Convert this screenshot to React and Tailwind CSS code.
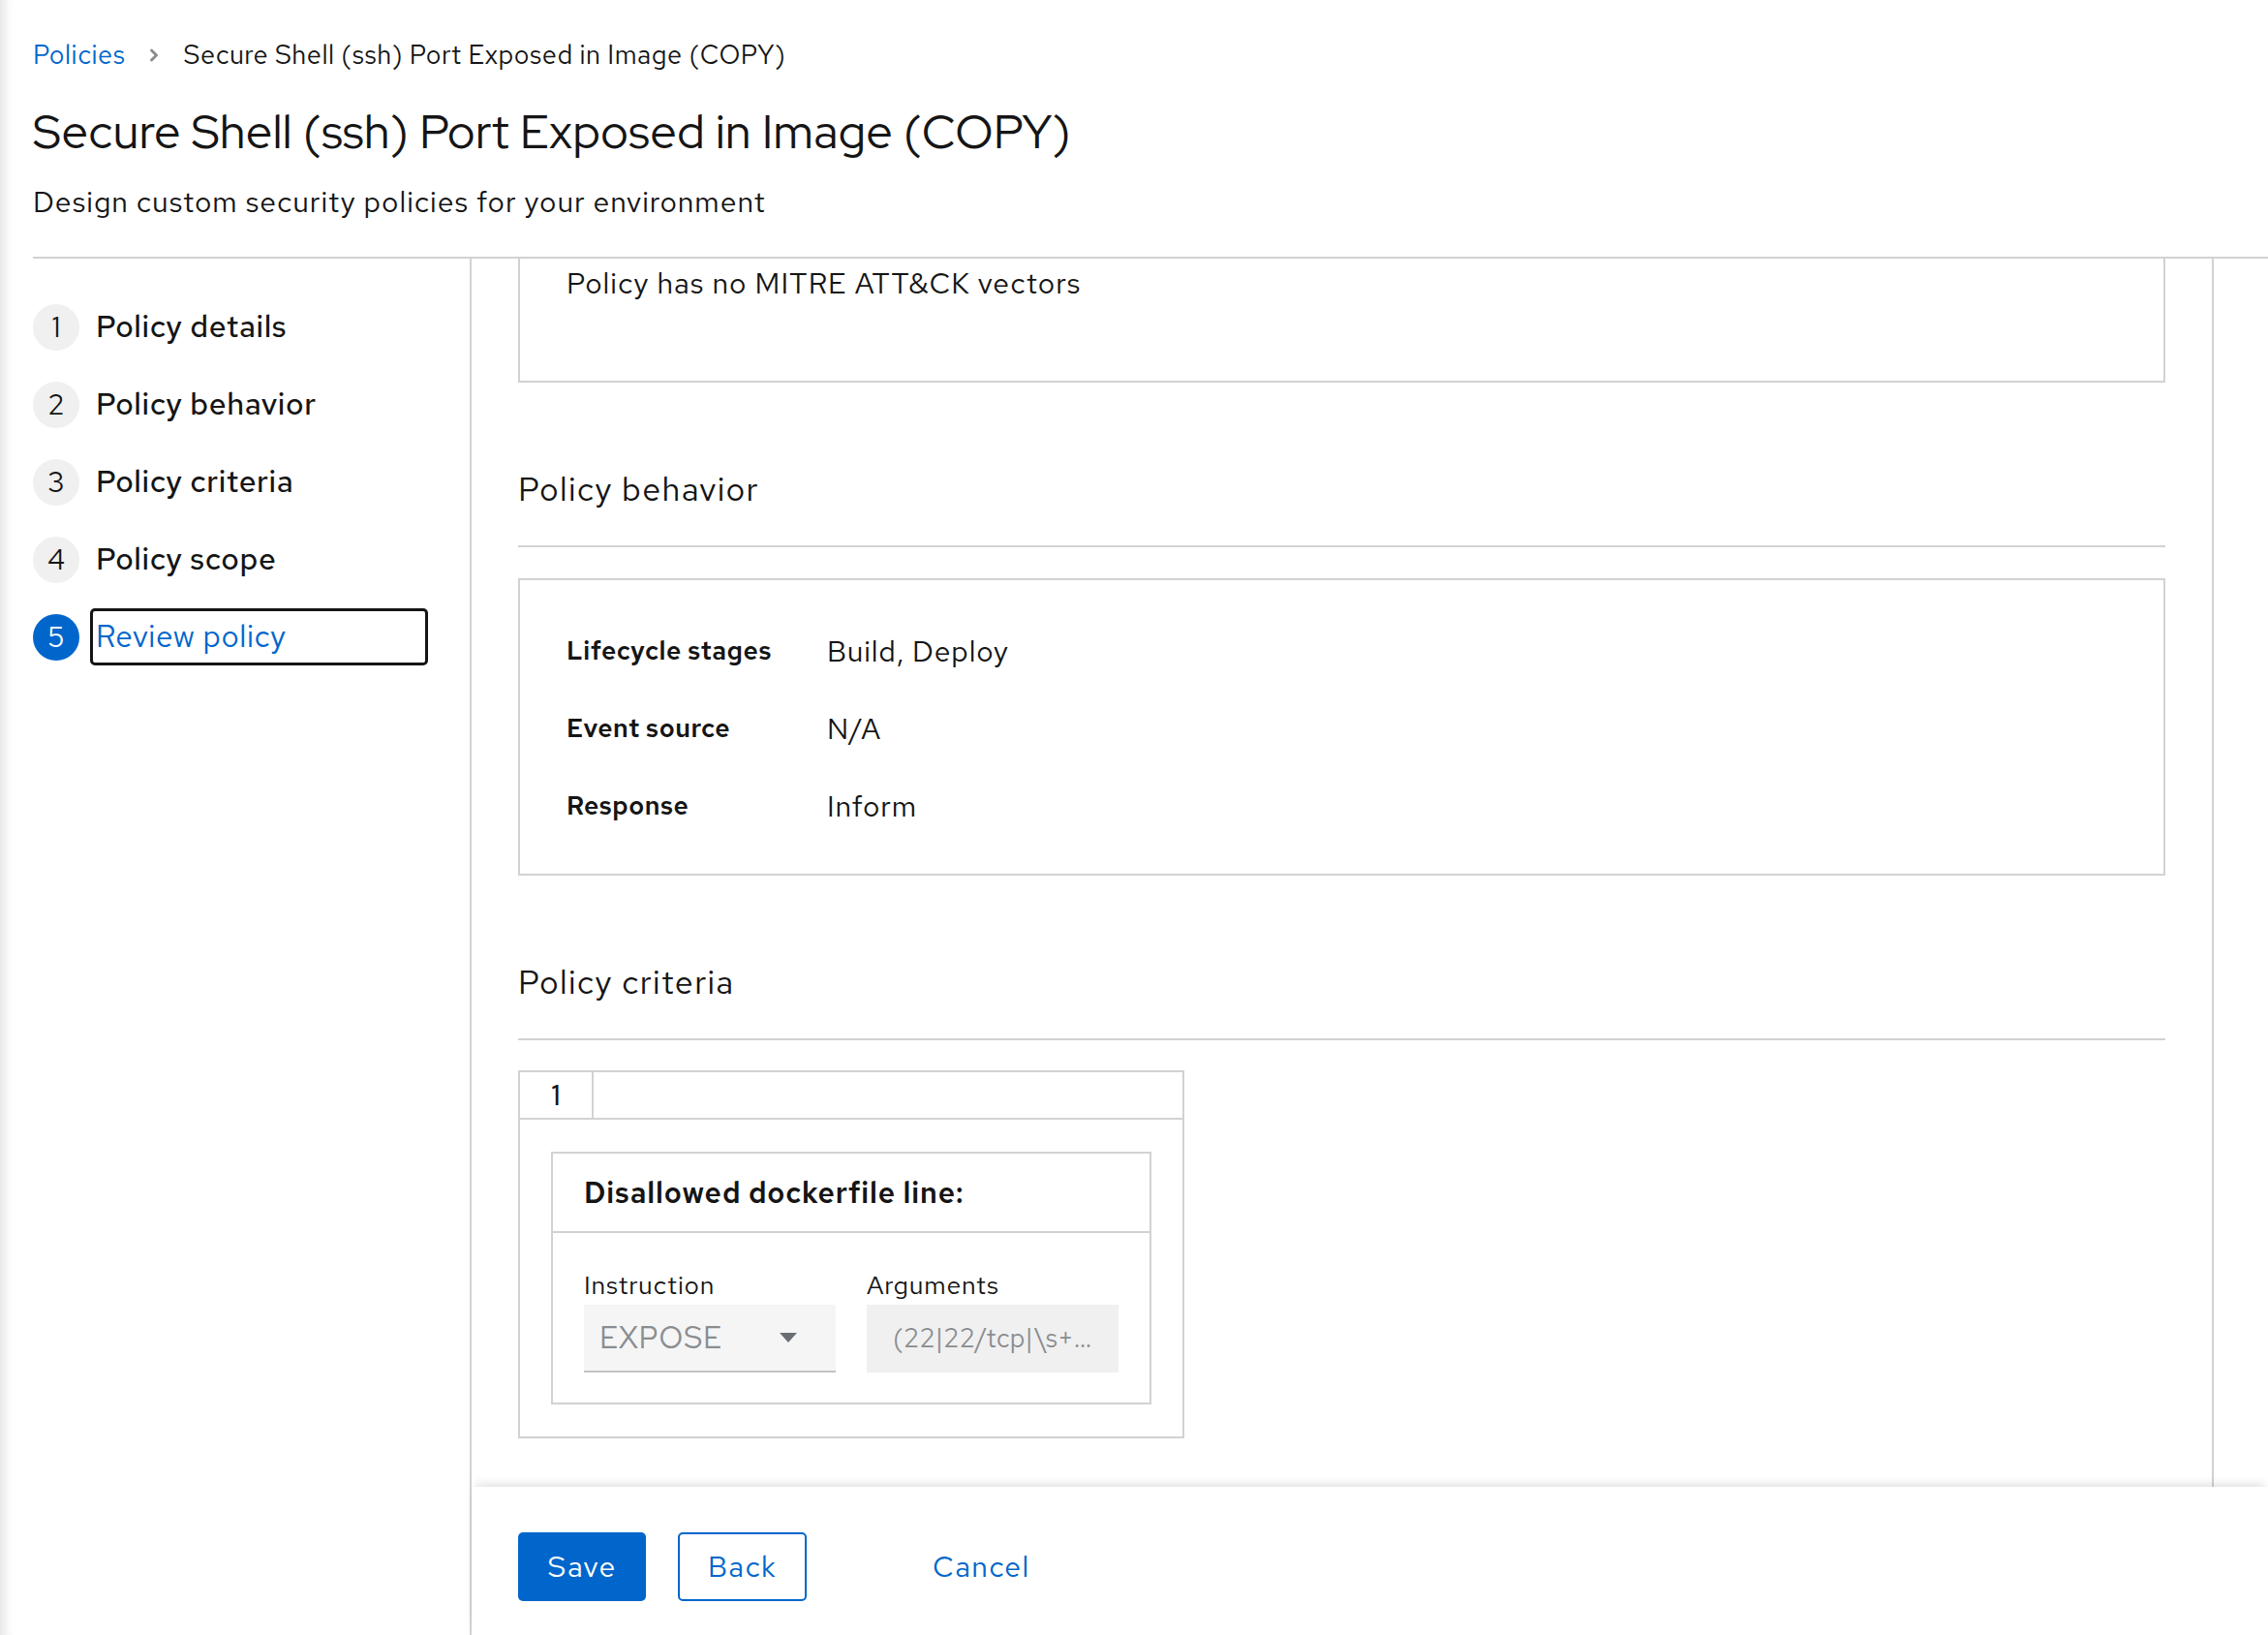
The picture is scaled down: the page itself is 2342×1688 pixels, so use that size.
import { ChevronRight } from 'lucide-react';

const STEPS = [
    { n: 1, label: 'Policy details' },
    { n: 2, label: 'Policy behavior' },
    { n: 3, label: 'Policy criteria' },
    { n: 4, label: 'Policy scope' },
    { n: 5, label: 'Review policy', active: true },
];

const BEHAVIOR = [
    { term: 'Lifecycle stages', value: 'Build, Deploy' },
    { term: 'Event source', value: 'N/A' },
    { term: 'Response', value: 'Inform' },
];

const StepNav = () => (
    <nav className="w-[453px] shrink-0 border-r-2 border-[#d2d2d2] pt-[41px]">
        <ol className="flex flex-col gap-[21px]">
            {STEPS.map((step) => (
                <li key={step.n} className="flex items-center">
                    <span
                        className={
                            step.active
                                ? 'flex h-[48px] w-[48px] shrink-0 items-center justify-center rounded-full bg-[#0066cc] text-[29px] text-white'
                                : 'flex h-[48px] w-[48px] shrink-0 items-center justify-center rounded-full bg-[#f0f0f0] text-[29px] text-[#151515]'
                        }
                    >
                        {step.n}
                    </span>
                    <span
                        className={
                            step.active
                                ? 'ml-[11px] flex h-[59px] w-[349px] items-center rounded-[5px] border-[3px] border-[#151515] px-[3px] text-[31.5px] tracking-[0.02em] text-[#0066cc]'
                                : 'ml-[11px] flex h-[59px] w-[349px] items-center rounded-[5px] border-[3px] border-transparent px-[3px] text-[31.5px] font-medium tracking-[0.02em] text-[#151515]'
                        }
                    >
                        {step.label}
                    </span>
                </li>
            ))}
        </ol>
    </nav>
);

const SectionTitle = ({ children }) => (
    <h2 className="mt-[90px] border-b-2 border-[#d2d2d2] pb-[38px] text-[34px] leading-[40px] tracking-[0.04em] text-[#151515]">
        {children}
    </h2>
);

const CriteriaCard = () => (
    <div className="mt-[31px] w-[688px] border-2 border-[#d2d2d2]">
        <div className="flex h-[49px] border-b-2 border-[#d2d2d2]">
            <div className="flex w-[76px] items-center justify-center border-r-2 border-[#d2d2d2] text-[29px] font-medium">
                1
            </div>
        </div>
        <div className="px-[32px] py-[33px]">
            <div className="border-2 border-[#d2d2d2]">
                <div className="flex h-[82px] items-center border-b-2 border-[#d2d2d2] px-[32px] text-[30px] font-semibold tracking-[0.03em]">
                    Disallowed dockerfile line:
                </div>
                <div className="flex gap-[32px] px-[32px] pb-[31px] pt-[36px]">
                    <div className="w-[260px]">
                        <div className="text-[26.5px] leading-[36px] tracking-[0.03em]">Instruction</div>
                        <div className="mt-[2px] flex h-[70px] items-center justify-between border-b-2 border-[#c1c4c7] bg-[#f5f5f5] pl-[16px] pr-[40px] text-[31px] tracking-[0.02em] text-[#8a8d90]">
                            <span>EXPOSE</span>
                            <svg width="18" height="10" viewBox="0 0 18 10">
                                <path d="M0 0 L18 0 L9 10 Z" fill="#6a6e73" />
                            </svg>
                        </div>
                    </div>
                    <div className="w-[260px]">
                        <div className="text-[26.5px] leading-[36px] tracking-[0.03em]">Arguments</div>
                        <div className="mt-[2px] flex h-[70px] items-center bg-[#f0f0f0] pl-[27px] pr-[10px] text-[27px] tracking-[0.01em] text-[#8a8d90]">
                            <span className="whitespace-nowrap">(22|22/tcp|\s+…</span>
                        </div>
                    </div>
                </div>
            </div>
        </div>
    </div>
);

export default function App() {
    return (
        <div className="flex h-[1688px] flex-col overflow-hidden bg-white font-['Red_Hat_Text','Inter',sans-serif] text-[#151515] shadow-[inset_16px_0_12px_-12px_rgba(0,0,0,0.12)]">
            <header className="px-[34px] pt-[39px]">
                <div className="flex items-center text-[27px] leading-[36px] tracking-[0.02em]">
                    <span className="text-[#0066cc]">Policies</span>
                    <ChevronRight className="mx-[20px] h-[20px] w-[20px] text-[#8a8d90]" strokeWidth={3.5} />
                    <span>Secure Shell (ssh) Port Exposed in Image (COPY)</span>
                </div>
                <h1 className="mt-[33px] font-['Red_Hat_Display','Inter',sans-serif] text-[48px] leading-[56px] tracking-[0.012em]">
                    Secure Shell (ssh) Port Exposed in Image (COPY)
                </h1>
                <p className="mt-[24px] text-[30px] leading-[40px] tracking-[0.033em]">
                    Design custom security policies for your environment
                </p>
            </header>

            <div className="ml-[34px] mt-[37px] flex min-h-0 flex-1 border-t-2 border-[#d2d2d2]">
                <StepNav />

                <div className="flex min-w-0 flex-1 flex-col">
                    <div className="mr-[56px] min-h-0 flex-1 overflow-hidden border-r-2 border-[#d2d2d2] px-[48px]">
                        <div className="-mt-[45px] border-2 border-[#d2d2d2] px-[48px] pb-[81px] pt-[48px] text-[30px] leading-[40px] tracking-[0.035em]">
                            Policy has no MITRE ATT&amp;CK vectors
                        </div>

                        <SectionTitle>Policy behavior</SectionTitle>
                        <div className="mt-[32px] grid grid-cols-[269px_1fr] items-center gap-y-[40px] border-2 border-[#d2d2d2] px-[48px] pb-[50px] pt-[53px]">
                            {BEHAVIOR.map((row) => (
                                <div key={row.term} className="contents">
                                    <div className="text-[26.5px] font-semibold leading-[40px] tracking-[0.02em]">{row.term}</div>
                                    <div className="text-[30px] leading-[40px] tracking-[0.03em]">{row.value}</div>
                                </div>
                            ))}
                        </div>

                        <SectionTitle>Policy criteria</SectionTitle>
                        <CriteriaCard />
                    </div>

                    <footer className="relative z-10 flex h-[153px] shrink-0 items-start bg-white px-[48px] pt-[47px] shadow-[0_-6px_10px_-4px_rgba(0,0,0,0.14)]">
                        <button className="h-[71px] w-[132px] rounded-[5px] bg-[#0066cc] text-[30px] tracking-[0.045em] text-white">
                            Save
                        </button>
                        <button className="ml-[33px] h-[71px] w-[133px] rounded-[5px] border-2 border-[#0066cc] text-[30px] tracking-[0.045em] text-[#0066cc]">
                            Back
                        </button>
                        <button className="ml-[97px] h-[71px] px-[33px] text-[30px] tracking-[0.045em] text-[#0066cc]">
                            Cancel
                        </button>
                    </footer>
                </div>
            </div>
        </div>
    );
}
